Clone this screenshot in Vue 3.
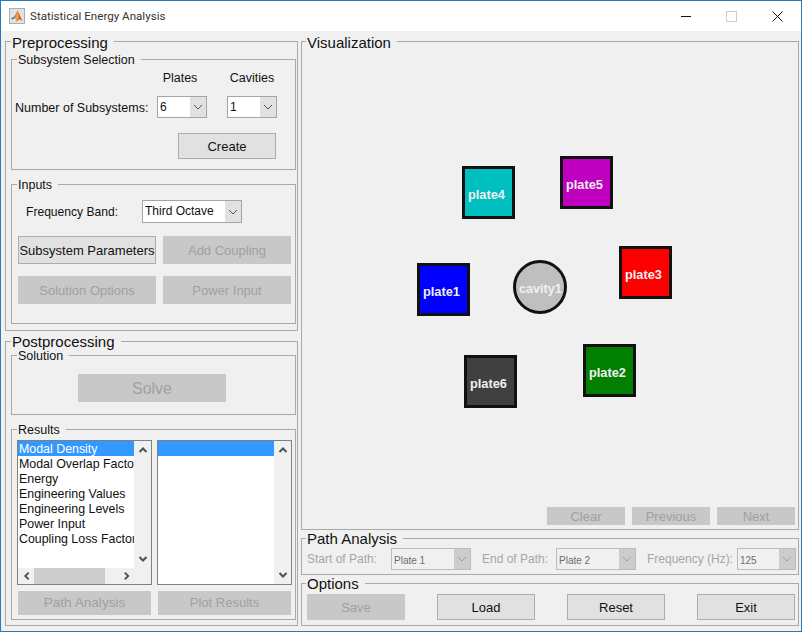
<script setup>
const results = ["Modal Density", "Modal Overlap Factor", "Energy", "Engineering Values", "Engineering Levels", "Power Input", "Coupling Loss Factor"];

// places on the drawing area, in window pixels
const plates = [
    { name: "plate4", x: 462, y: 166, color: "#00bfbf" },
    { name: "plate5", x: 560, y: 156, color: "#bf00bf" },
    { name: "plate3", x: 619, y: 246, color: "#ff0000" },
    { name: "plate1", x: 417, y: 263, color: "#0000ff" },
    { name: "plate2", x: 583, y: 344, color: "#007f00" },
    { name: "plate6", x: 464, y: 355, color: "#404040" },
];

function placeStyle(p) {
    return { left: p.x - 302 + "px", top: p.y - 42 + "px", background: p.color };
}
</script>

<template>
    <div class="window">
        <svg width="0" height="0" class="sprite">
            <symbol id="chev" viewBox="0 0 10 6">
                <polyline points="1,1 5,5 9,1" fill="none" stroke="#555" stroke-width="1" />
            </symbol>
            <symbol id="scroll" viewBox="0 0 10 8">
                <polyline points="1.5,6 5,2.5 8.5,6" fill="none" stroke="#505050" stroke-width="2" />
            </symbol>
        </svg>

        <div class="titlebar">
            <svg class="logo" width="16" height="16" viewBox="0 0 16 16">
                <rect x="0.5" y="0.5" width="15" height="15" fill="#dfe3e6" stroke="#a8aeb4" />
                <path d="M2 10.5 L5.5 8.5 L8.5 2.5 L13.5 13 L10.5 11 L8 13.5 L6 9.5 Z" fill="#d9531e" />
                <path d="M8.5 2.5 L10 9 L8 13.5 L6 9.5 Z" fill="#f0a040" />
                <path d="M2 10.5 L5.5 8.5 L6 9.5 L4 11.5 Z" fill="#3f7fa8" />
            </svg>
            <span class="title">Statistical Energy Analysis</span>
            <div class="controls">
                <svg width="10" height="10" viewBox="0 0 10 10" class="ctl-min"><path d="M0 5.5 H10" stroke="#111" /></svg>
                <svg width="11" height="11" viewBox="0 0 11 11" class="ctl-max"><rect x="0.5" y="0.5" width="10" height="10" fill="none" stroke="#ccc" /></svg>
                <svg width="11" height="11" viewBox="0 0 11 11" class="ctl-close"><path d="M0.5 0.5 L10.5 10.5 M10.5 0.5 L0.5 10.5" stroke="#111" /></svg>
            </div>
        </div>

        <div class="body">
            <div class="left">
                <div class="group pre">
                    <div class="legend big">Preprocessing</div>
                    <div class="group sub-selection">
                        <div class="legend">Subsystem Selection</div>
                        <div class="sub-grid">
                            <span></span>
                            <span class="head">Plates</span>
                            <span class="head">Cavities</span>
                            <span class="row-label">Number of Subsystems:</span>
                            <div class="select">
                                <span class="value">6</span>
                                <span class="arrow"><svg width="10" height="6"><use href="#chev" /></svg></span>
                            </div>
                            <div class="select">
                                <span class="value">1</span>
                                <span class="arrow"><svg width="10" height="6"><use href="#chev" /></svg></span>
                            </div>
                            <button class="btn create">Create</button>
                        </div>
                    </div>
                    <div class="group inputs">
                        <div class="legend">Inputs</div>
                        <div class="band-row">
                            <span class="band-label">Frequency Band:</span>
                            <div class="select band">
                                <span class="value">Third Octave</span>
                                <span class="arrow"><svg width="10" height="6"><use href="#chev" /></svg></span>
                            </div>
                        </div>
                        <div class="input-btns">
                            <button class="btn">Subsystem Parameters</button>
                            <button class="btn off">Add Coupling</button>
                            <button class="btn off">Solution Options</button>
                            <button class="btn off">Power Input</button>
                        </div>
                    </div>
                </div>

                <div class="group post">
                    <div class="legend big">Postprocessing</div>
                    <div class="group solution">
                        <div class="legend">Solution</div>
                        <button class="btn off solve">Solve</button>
                    </div>
                    <div class="group results">
                        <div class="legend">Results</div>
                        <div class="lists">
                            <div class="listbox">
                                <div class="list-main">
                                    <div class="items">
                                        <div v-for="(r, i) in results" :key="r" class="item" :class="{ selected: i === 0 }">{{ r }}</div>
                                    </div>
                                    <div class="vscroll">
                                        <svg width="10" height="8"><use href="#scroll" /></svg>
                                        <svg width="10" height="8" class="flip"><use href="#scroll" /></svg>
                                    </div>
                                </div>
                                <div class="hscroll">
                                    <svg width="10" height="8" class="to-left"><use href="#scroll" /></svg>
                                    <span class="thumb"></span>
                                    <svg width="10" height="8" class="to-right"><use href="#scroll" /></svg>
                                </div>
                            </div>
                            <div class="listbox">
                                <div class="list-main full">
                                    <div class="items">
                                        <div class="item selected">&nbsp;</div>
                                    </div>
                                    <div class="vscroll">
                                        <svg width="10" height="8"><use href="#scroll" /></svg>
                                        <svg width="10" height="8" class="flip"><use href="#scroll" /></svg>
                                    </div>
                                </div>
                            </div>
                        </div>
                        <div class="result-btns">
                            <button class="btn off path-btn">Path Analysis</button>
                            <button class="btn off">Plot Results</button>
                        </div>
                    </div>
                </div>
            </div>

            <div class="right">
                <div class="group vis">
                    <div class="legend big">Visualization</div>
                    <div
                        v-for="p in plates"
                        :key="p.name"
                        class="node"
                        :style="placeStyle(p)"
                    >
                        {{ p.name }}
                    </div>
                    <div class="node cavity">cavity1</div>
                    <div class="vis-btns">
                        <button class="btn off">Clear</button>
                        <button class="btn off">Previous</button>
                        <button class="btn off">Next</button>
                    </div>
                </div>

                <div class="group path">
                    <div class="legend big">Path Analysis</div>
                    <div class="path-row">
                        <span class="path-label l1">Start of Path:</span>
                        <div class="select dis s80">
                            <span class="value">Plate 1</span>
                            <span class="arrow"><svg width="10" height="6"><use href="#chev" opacity="0.4" /></svg></span>
                        </div>
                        <span class="path-label l2">End of Path:</span>
                        <div class="select dis s80">
                            <span class="value">Plate 2</span>
                            <span class="arrow"><svg width="10" height="6"><use href="#chev" opacity="0.4" /></svg></span>
                        </div>
                        <span class="path-label l3">Frequency (Hz):</span>
                        <div class="select dis s59">
                            <span class="value">125</span>
                            <span class="arrow"><svg width="10" height="6"><use href="#chev" opacity="0.4" /></svg></span>
                        </div>
                    </div>
                </div>

                <div class="group options">
                    <div class="legend big">Options</div>
                    <div class="option-btns">
                        <button class="btn off">Save</button>
                        <button class="btn">Load</button>
                        <button class="btn">Reset</button>
                        <button class="btn">Exit</button>
                    </div>
                </div>
            </div>
        </div>
    </div>
</template>

<style>
html,
body {
    margin: 0;
    background: #f0f0f0;
}
</style>

<style scoped>
.window {
    box-sizing: border-box;
    width: 802px;
    height: 632px;
    border: 1px solid #2b79b5;
    background: #f0f0f0;
    font-family: "Liberation Sans", Arial, sans-serif;
    font-size: 12px;
    color: #111;
    overflow: hidden;
}

.sprite {
    display: block;
    height: 0;
}

.titlebar {
    display: flex;
    align-items: center;
    height: 30px;
    background: #fff;
}

.logo {
    margin-left: 8px;
}

.title {
    margin-left: 5px;
    font-family: Roboto, sans-serif;
    font-size: 11.6px;
    color: #333;
}

.controls {
    margin-left: auto;
    display: flex;
    align-items: center;
}

.ctl-min {
    margin-right: 35px;
}

.ctl-max {
    margin-right: 35px;
}

.ctl-close {
    margin-right: 18px;
}

.body {
    display: flex;
    padding: 10px 0 0 4px;
    gap: 3px;
}

.left {
    width: 293px;
}

.right {
    width: 498px;
}

.group {
    box-sizing: border-box;
    border: 1px solid #a9a9a9;
}

.legend {
    width: fit-content;
    height: 14px;
    line-height: 14px;
    margin: -7px 0 0 5px;
    padding: 0 6px 0 1px;
    background: #f0f0f0;
    font-size: 12.5px;
}

.legend.big {
    height: 18px;
    line-height: 18px;
    margin-top: -8px;
    margin-left: 4px;
    font-size: 15px;
}

.pre .legend.big,
.post .legend.big {
    margin-left: 0;
}

.path .legend.big,
.options .legend.big,
.post .legend.big {
    margin-top: -9px;
}

.pre {
    height: 290px;
    padding-left: 5px;
}

.sub-selection {
    width: 285px;
    height: 111px;
    margin-top: 7px;
}

.sub-grid {
    display: grid;
    grid-template-columns: 142px 70px 50px;
    grid-template-rows: 14px 22px 26px;
    row-gap: 12px;
    padding: 3px 0 0 3px;
    font-size: 12.5px;
}

.head {
    padding-top: 1px;
    text-align: center;
}

.head:nth-child(2) {
    width: 50px;
    margin-left: -2px;
}

.row-label {
    align-self: center;
    padding-top: 1px;
}

.select {
    box-sizing: border-box;
    display: flex;
    width: 50px;
    height: 22px;
    border: 1px solid #a5a5a5;
    background: #fff;
    font-size: 12px;
    line-height: 21px;
}

.value {
    flex: 1;
    padding-left: 2px;
    overflow: hidden;
    white-space: nowrap;
}

.arrow {
    display: flex;
    align-items: center;
    justify-content: center;
    width: 16px;
    background: #e1e1e1;
}

.btn {
    box-sizing: border-box;
    height: 28px;
    margin: 0;
    padding: 0;
    border: 1px solid #adadad;
    border-radius: 0;
    background: #e1e1e1;
    font-family: "Liberation Sans", Arial, sans-serif;
    font-size: 13px;
    color: #111;
    white-space: nowrap;
}

.btn.off {
    border-color: #c8c8c8;
    background: #c8c8c8;
    color: #a0a0a0;
}

.create {
    grid-column: 2 / 4;
    width: 98px;
    height: 26px;
    justify-self: end;
    margin: 3px 1px 0 0;
}

.inputs {
    width: 285px;
    height: 140px;
    margin-top: 14px;
}

.band-row {
    display: flex;
    align-items: center;
    margin-top: 8px;
    padding-left: 14px;
}

.band-label {
    width: 116px;
    padding-top: 1px;
    font-size: 12.1px;
}

.select.band {
    width: 100px;
    height: 23px;
}

.input-btns {
    display: grid;
    grid-template-columns: 138px 128px;
    column-gap: 7px;
    row-gap: 12px;
    margin-top: 13px;
    padding-left: 6px;
}

.post {
    height: 285px;
    margin-top: 10px;
    padding-left: 5px;
}

.solution {
    width: 285px;
    height: 60px;
    margin-top: 4px;
}

.solve {
    display: block;
    width: 148px;
    margin: 11px 0 0 66px;
    padding-top: 2px;
    font-size: 16px;
}

.results {
    width: 285px;
    height: 191px;
    margin-top: 14px;
}

.lists {
    display: flex;
    gap: 5px;
    margin-top: 3px;
    padding-left: 5px;
}

.listbox {
    box-sizing: border-box;
    display: flex;
    flex-direction: column;
    width: 135px;
    height: 145px;
    border: 1px solid #808080;
    background: #fff;
}

.list-main {
    display: flex;
    height: 127px;
}

.list-main.full {
    height: 143px;
}

.items {
    width: 116px;
    overflow: hidden;
    white-space: nowrap;
    font-size: 12.4px;
}

.item {
    height: 15px;
    line-height: 17px;
    padding-left: 1px;
}

.item.selected {
    background: #3399ff;
    color: #fff;
}

.vscroll {
    display: flex;
    flex-direction: column;
    justify-content: space-between;
    align-items: center;
    width: 17px;
    padding: 5px 0;
    box-sizing: border-box;
    background: #f0f0f0;
}

.flip {
    transform: rotate(180deg);
}

.hscroll {
    display: flex;
    align-items: center;
    height: 16px;
    background: #f0f0f0;
}

.to-left {
    transform: rotate(-90deg);
    margin-left: 4px;
}

.to-right {
    transform: rotate(90deg);
    margin-right: 20px;
}

.thumb {
    width: 74px;
    height: 16px;
    margin-left: 3px;
    margin-right: 17px;
    background: #cdcdcd;
}

.result-btns {
    display: grid;
    grid-template-columns: 133px 133px;
    column-gap: 7px;
    margin-top: 6px;
    padding-left: 6px;
}

.result-btns .btn {
    height: 24px;
    padding-bottom: 2px;
}

.result-btns .path-btn {
    font-size: 13.6px;
}

.vis {
    position: relative;
    display: flex;
    flex-direction: column;
    height: 489px;
}

.node {
    position: absolute;
    box-sizing: border-box;
    display: flex;
    align-items: center;
    width: 53px;
    height: 53px;
    padding: 3px 0 0 3px;
    border: 3px solid #111;
    font-size: 12.8px;
    font-weight: bold;
    color: #f0f0f0;
}

.cavity {
    left: 211px;
    top: 218px;
    width: 54px;
    height: 54px;
    padding-left: 3px;
    border-radius: 50%;
    font-size: 12.6px;
    background: #bfbfbf;
}

.vis-btns {
    display: flex;
    justify-content: flex-end;
    gap: 7px;
    margin-top: auto;
    padding: 0 3px 4px 0;
}

.vis-btns .btn {
    width: 78px;
    height: 18px;
}

.path {
    height: 37px;
    margin-top: 8px;
}

.path-row {
    display: flex;
    align-items: center;
    padding-left: 5px;
}

.path-label {
    color: #a6a6a6;
}

.l1 {
    width: 84px;
}

.l2 {
    width: 74px;
    margin-left: 11px;
}

.l3 {
    width: 90px;
    margin-left: 11px;
}

.select.dis {
    border-color: #bcbcbc;
    background: #f0f0f0;
    color: #6d6d6d;
    font-size: 10px;
    line-height: 23px;
}

.select.dis .arrow {
    background: #cccccc;
}

.s80 {
    width: 80px;
}

.s59 {
    width: 59px;
}

.options {
    height: 43px;
    margin-top: 8px;
}

.option-btns {
    display: flex;
    gap: 32px;
    margin-top: 1px;
    padding-left: 5px;
}

.option-btns .btn {
    width: 98px;
    height: 26px;
}
</style>
